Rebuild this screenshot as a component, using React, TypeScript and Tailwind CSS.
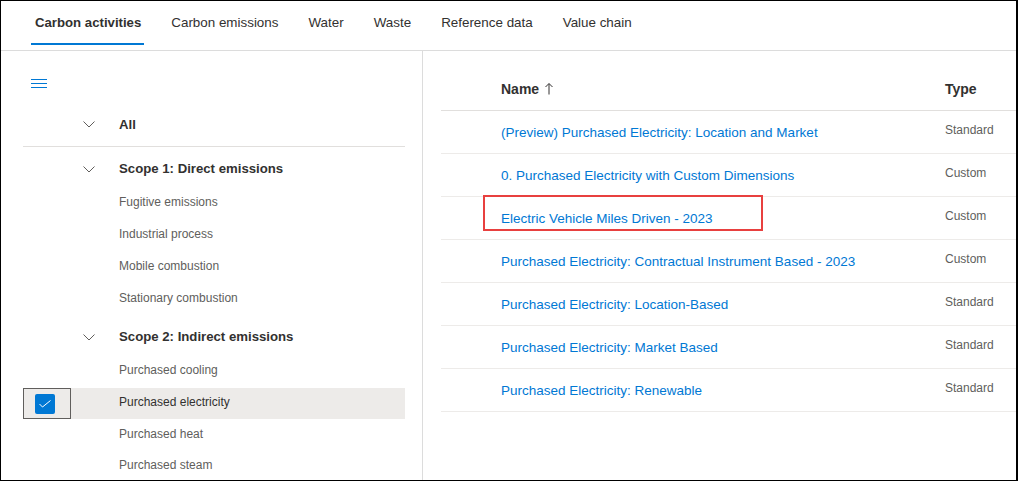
import React from "react";

const tabs = ["Carbon activities", "Carbon emissions", "Water", "Waste", "Reference data", "Value chain"];

const scope1 = ["Fugitive emissions", "Industrial process", "Mobile combustion", "Stationary combustion"];

const rows = [
  { name: "(Preview) Purchased Electricity: Location and Market", type: "Standard" },
  { name: "0. Purchased Electricity with Custom Dimensions", type: "Custom" },
  { name: "Electric Vehicle Miles Driven - 2023", type: "Custom", marked: true },
  { name: "Purchased Electricity: Contractual Instrument Based - 2023", type: "Custom" },
  { name: "Purchased Electricity: Location-Based", type: "Standard" },
  { name: "Purchased Electricity: Market Based", type: "Standard" },
  { name: "Purchased Electricity: Renewable", type: "Standard" },
];

const Chevron = () => (
  <svg width="12" height="7" viewBox="0 0 12 7" fill="none">
    <path d="M0.5 0.5 L6 6 L11.5 0.5" stroke="#605e5c" strokeWidth="1" />
  </svg>
);

const GroupRow = ({ label, first }: { label: string; first?: boolean }) => (
  <div
    className={
      first
        ? "flex items-center h-[44px] border-b border-[#e1dfdd]"
        : "flex items-center h-[32px]"
    }
  >
    <div className="w-[60px]" />
    <Chevron />
    <span className="ml-[24px] text-[13.2px] font-semibold text-[#323130]">{label}</span>
  </div>
);

const Leaf = ({ label, className }: { label: string; className?: string }) => (
  <div className={"flex items-center " + (className ?? "h-[32px] pt-[2px]")}>
    <span className="ml-[96px] text-[12px] text-[#605e5c]">{label}</span>
  </div>
);

export default function App() {
  return (
    <div
      className="w-[1018px] h-[481px] bg-white border border-black border-r-2 flex flex-col overflow-hidden"
      style={{ fontFamily: '"Liberation Sans", Arial, sans-serif' }}
    >
      {/* pivot tabs */}
      <div className="h-[50px] shrink-0 border-b border-[#dcdcdc] flex items-start pl-[19px]">
        {tabs.map((t, i) => (
          <div key={t} className="relative h-[49px] flex items-center px-[15px] pb-[5px]">
            <span
              className={
                i === 0
                  ? "text-[13.2px] font-semibold text-[#323130]"
                  : "text-[13.4px] text-[#323130]"
              }
            >
              {t}
            </span>
            {i === 0 && (
              <div className="absolute left-[11px] right-[12px] top-[42px] h-[2px] bg-[#0078d4]" />
            )}
          </div>
        ))}
      </div>

      <div className="flex flex-1 min-h-0">
        {/* left tree */}
        <div className="w-[422px] shrink-0 border-r border-[#dcdcdc] pl-[22px] pr-[17px]">
          <div className="h-[52px] pt-[28px] pl-[8px]">
            <svg width="16" height="9" viewBox="0 0 16 9" className="block">
              <rect x="0" y="0" width="16" height="1" fill="#0078d4" />
              <rect x="0" y="4" width="16" height="1" fill="#0078d4" />
              <rect x="0" y="8" width="16" height="1" fill="#0078d4" />
            </svg>
          </div>
          <GroupRow label="All" first />

          <div className="mt-[6px]">
            <GroupRow label="Scope 1: Direct emissions" />
            {scope1.map((it) => (
              <Leaf key={it} label={it} />
            ))}
          </div>

          <div className="mt-[8px]">
            <GroupRow label="Scope 2: Indirect emissions" />
            <Leaf label="Purchased cooling" />
            <div className="flex items-center mt-[3px] h-[31px] bg-[#edebe9]">
              <div className="w-[48px] h-full border border-[#605e5c] flex items-center pl-[11px]">
                <div className="w-[20px] h-[20px] rounded-[2px] bg-[#0078d4] flex items-center justify-center">
                  <svg width="12" height="8" viewBox="0 0 12 8" fill="none">
                    <path d="M0.5 4 L3.5 7 L11.5 0.5" stroke="white" strokeWidth="1" />
                  </svg>
                </div>
              </div>
              <span className="ml-[48px] mb-[4px] text-[12px] text-[#323130]">Purchased electricity</span>
            </div>
            <Leaf label="Purchased heat" className="h-[30px] pb-[1px]" />
            <Leaf label="Purchased steam" className="h-[32px]" />
          </div>
        </div>

        {/* right list */}
        <div className="flex-1 pl-[18px]">
          <div className="mt-[17px] h-[43px] flex items-center border-b border-[#e1dfdd]">
            <div className="w-[504px] pl-[60px] flex items-center gap-[6px]">
              <span className="text-[14px] font-semibold text-[#323130]">Name</span>
              <svg width="8" height="12" viewBox="0 0 8 12" fill="none">
                <path d="M4 11.5 V0.8 M0.5 4 L4 0.5 L7.5 4" stroke="#323130" strokeWidth="1" />
              </svg>
            </div>
            <span className="text-[14px] font-semibold text-[#323130]">Type</span>
          </div>
          {rows.map((r) => (
            <div key={r.name} className="relative h-[43px] flex items-center border-b border-[#edebe9]">
              <div className="w-[504px] pl-[60px]">
                <span className="text-[13.5px] text-[#0078d4]">{r.name}</span>
              </div>
              <span className="text-[12px] text-[#605e5c] mb-[4px]">{r.type}</span>
              {r.marked && (
                <div className="absolute left-[42px] top-[-2px] w-[280px] h-[36px] border-2 border-[#e8403f]" />
              )}
            </div>
          ))}
        </div>
      </div>
    </div>
  );
}
